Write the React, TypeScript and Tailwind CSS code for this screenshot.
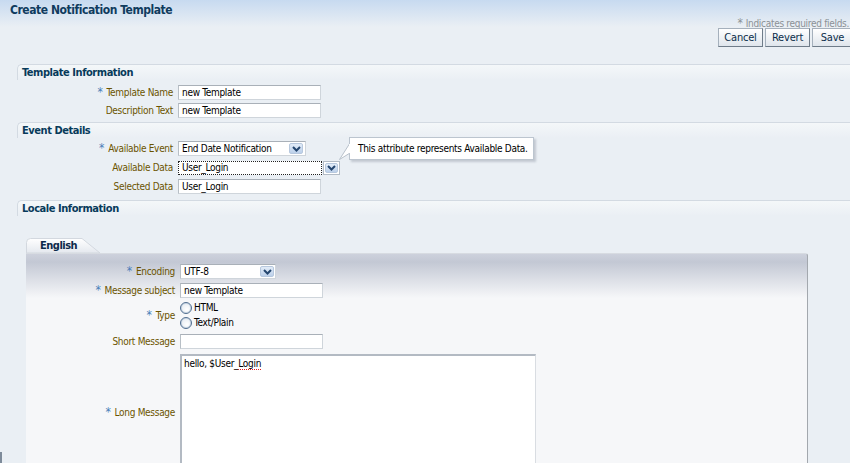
import React from "react";

const ChevronBtn = ({ className = "" }: { className?: string }) => (
  <div
    className={`flex items-center justify-center rounded-[2px] border border-[#b7c8de] bg-[linear-gradient(#e2ecf8,#bcd0ea)] ${className}`}
  >
    <svg width="9" height="6" viewBox="0 0 9 6">
      <path d="M1 1 L4.5 4.5 L8 1" fill="none" stroke="#24466f" strokeWidth="2" />
    </svg>
  </div>
);

const Label = ({ req, children, w }: { req?: boolean; children: React.ReactNode; w: string }) => (
  <div className={`${w} shrink-0 text-right text-[#6b5400] whitespace-nowrap`}>
    {req && <span className="text-[12px] text-[#4a7db8] mr-[4px]">*</span>}
    {children}
  </div>
);

const TextBox = ({ value, w }: { value: string; w: string }) => (
  <div
    className={`${w} h-[15px] shrink-0 border border-[#cfd5db] border-t-[#a9b0b8] border-l-[#b8bfc6] bg-white px-[3px] leading-[13px] text-black whitespace-nowrap overflow-hidden`}
  >
    {value}
  </div>
);

const SectionHeader = ({ children, mt }: { children: React.ReactNode; mt: string }) => (
  <div
    className={`${mt} ml-[17px] h-[16px] rounded-tl-[5px] border-t border-l border-[#d3dae2] bg-[linear-gradient(#f4f7f9,#eaeff4)] pl-[4px] font-bold text-[11px] leading-[15px] tracking-[-0.45px] text-[#073a5a]`}
  >
    {children}
  </div>
);

const Radio = ({ label }: { label: string }) => (
  <div className="flex items-center h-[15px]">
    <div className="w-[12px] h-[12px] rounded-full border border-[#4f6d8f] bg-[radial-gradient(circle_at_60%_65%,#ffffff,#dfe6ee)] shadow-[inset_0_0_0_1px_#c9d6e4]" />
    <span className="ml-[2px] text-black">{label}</span>
  </div>
);

const Button = ({ children, w }: { children: React.ReactNode; w: string }) => (
  <div
    className={`${w} h-[19px] shrink-0 flex items-center justify-center border border-[#a5b0bc] border-r-[#6f7c89] border-b-[#6f7c89] bg-[linear-gradient(#ffffff,#dfe5ec)] text-[11px] tracking-[-0.2px] text-[#0c2e4b]`}
  >
    {children}
  </div>
);

export default function App() {
  return (
    <div className="relative w-[850px] h-[463px] overflow-hidden bg-[#eaeff4] font-['DejaVu_Sans_Condensed','Liberation_Sans',sans-serif] text-[10px] leading-[15px] tracking-[-0.3px]">
      {/* page header */}
      <div className="bg-[linear-gradient(#c7daf0,#eaeff4_27px)]">
        <div className="h-[18px] pl-[10px] pt-[2px] font-bold text-[12px] leading-[16px] tracking-[-0.45px] text-[#0f3b5e]">
          Create Notification Template
        </div>
        <div className="h-[10px] pr-[1px] text-right text-[10px] leading-[10px] text-[#8b9196]">
          <span className="text-[12px] mr-[3px]">*</span>Indicates required fields.
        </div>
        <div className="flex justify-end gap-[2px] -mr-[3px]">
          <Button w="w-[45px]">Cancel</Button>
          <Button w="w-[45px]">Revert</Button>
          <Button w="w-[41px]">Save</Button>
        </div>
      </div>

      {/* Template Information */}
      <SectionHeader mt="mt-[17px]">Template Information</SectionHeader>
      <div className="mt-[5px] flex flex-col gap-[3px]">
        <div className="flex items-center">
          <Label req w="w-[173px]">Template Name</Label>
          <div className="w-[5px]" />
          <TextBox value="new Template" w="w-[143px]" />
        </div>
        <div className="flex items-center">
          <Label w="w-[173px]">Description Text</Label>
          <div className="w-[5px]" />
          <TextBox value="new Template" w="w-[143px]" />
        </div>
      </div>

      {/* Event Details */}
      <SectionHeader mt="mt-[4px]">Event Details</SectionHeader>
      <div className="mt-[3px] flex flex-col gap-[4px]">
        <div className="flex items-center">
          <Label req w="w-[173px]">Available Event</Label>
          <div className="w-[5px]" />
          <div className="w-[128px] h-[15px] flex items-center border border-[#cfd5db] border-t-[#a9b0b8] border-l-[#b8bfc6] bg-white pl-[3px] pr-[2px] text-black">
            <span className="flex-1 whitespace-nowrap">End Date Notification</span>
            <ChevronBtn className="w-[14px] h-[11px]" />
          </div>
        </div>
        <div className="relative flex items-center">
          <Label w="w-[173px]">Available Data</Label>
          <div className="w-[5px]" />
          <div className="w-[144px] h-[14px] border border-dotted border-[#222] bg-white pl-[3px] leading-[12px] text-black">
            User_Login
          </div>
          <div className="w-[17px] h-[14px] ml-[1px] border border-[#b3bcc6] bg-white p-[1px]">
            <ChevronBtn className="w-full h-full" />
          </div>
          {/* help note */}
          <div className="absolute left-[338px] top-[-23px] w-[200px] h-[26px]">
            <svg className="absolute left-0 top-0" width="14" height="26" viewBox="0 0 14 26">
              <path d="M12 6 L1.5 22.5 L12 16" fill="#ffffff" stroke="#b8c1cb" strokeWidth="1" />
            </svg>
            <div className="absolute left-[11px] top-0 w-[185px] h-[23px] border border-[#bcc5cf] bg-white shadow-[2px_2px_2px_rgba(120,130,145,0.35)] pl-[8px] leading-[21px] text-black whitespace-nowrap">
              This attribute represents Available Data.
            </div>
            <div className="absolute left-[11px] top-[7px] w-[2px] h-[9px] bg-white" />
          </div>
        </div>
        <div className="flex items-center">
          <Label w="w-[173px]">Selected Data</Label>
          <div className="w-[5px]" />
          <TextBox value="User_Login" w="w-[143px]" />
        </div>
      </div>

      {/* Locale Information */}
      <SectionHeader mt="mt-[6px]">Locale Information</SectionHeader>

      <div className="mt-[22px] ml-[26px] w-[782px]">
        {/* tab */}
        <div className="relative h-[15px] w-[76px]">
          <svg className="absolute left-0 top-0" width="76" height="15" viewBox="0 0 76 15">
            <defs>
              <linearGradient id="tabFill" x1="0" y1="0" x2="0" y2="1">
                <stop offset="0" stopColor="#ffffff" />
                <stop offset="1" stopColor="#e4e8ee" />
              </linearGradient>
            </defs>
            <path d="M0.5 15 L0.5 4.5 Q0.5 0.5 4.5 0.5 L56 0.5 L74 15 Z" fill="url(#tabFill)" stroke="#d3d8df" strokeWidth="1" />
          </svg>
          <div className="relative pl-[14px] font-bold text-[11px] leading-[15px] tracking-[-0.5px] text-[#0c2a4a]">English</div>
        </div>
        {/* tab panel */}
        <div className="h-[220px] rounded-tr-[3px] border-t border-[#d7dbe1] border-r border-r-[#a3a8ae] bg-[linear-gradient(#cdd1dc,#c3c8d4_8px,#f6f7f9_44px)] pt-[10px]">
          <div className="flex items-center h-[15px]">
            <Label req w="w-[149px]">Encoding</Label>
            <div className="w-[5px]" />
            <div className="w-[96px] h-[15px] flex items-center border border-[#cfd5db] border-t-[#a9b0b8] border-l-[#b8bfc6] bg-white pl-[3px] pr-[1px] text-black">
              <span className="flex-1">UTF-8</span>
              <ChevronBtn className="w-[14px] h-[11px]" />
            </div>
          </div>
          <div className="mt-[4px] flex items-center">
            <Label req w="w-[149px]">Message subject</Label>
            <div className="w-[5px]" />
            <TextBox value="new Template" w="w-[143px]" />
          </div>
          <div className="mt-[2px] flex items-center">
            <Label req w="w-[149px]">Type</Label>
            <div className="w-[5px]" />
            <div className="flex flex-col">
              <Radio label="HTML" />
              <Radio label="Text/Plain" />
            </div>
          </div>
          <div className="mt-[4px] flex items-center">
            <Label w="w-[149px]">Short Message</Label>
            <div className="w-[5px]" />
            <TextBox value="" w="w-[143px]" />
          </div>
          <div className="mt-[5px] flex items-center">
            <Label req w="w-[149px]">Long Message</Label>
            <div className="w-[5px]" />
            <div className="w-[356px] h-[117px] border-2 border-[#b3bac3] border-r-[#d9dde2] border-r-[1px] border-b-0 bg-white pl-[2px] pt-[1px] leading-[14px] text-black">
              hello, $User_<span className="border-b border-dotted border-[#e02020]">Login</span>
            </div>
          </div>
        </div>
      </div>

      {/* splitter handle at the page edge */}
      <div className="absolute left-0 bottom-0 w-[2px] h-[11px] bg-[#7e8b9a]" />
    </div>
  );
}
